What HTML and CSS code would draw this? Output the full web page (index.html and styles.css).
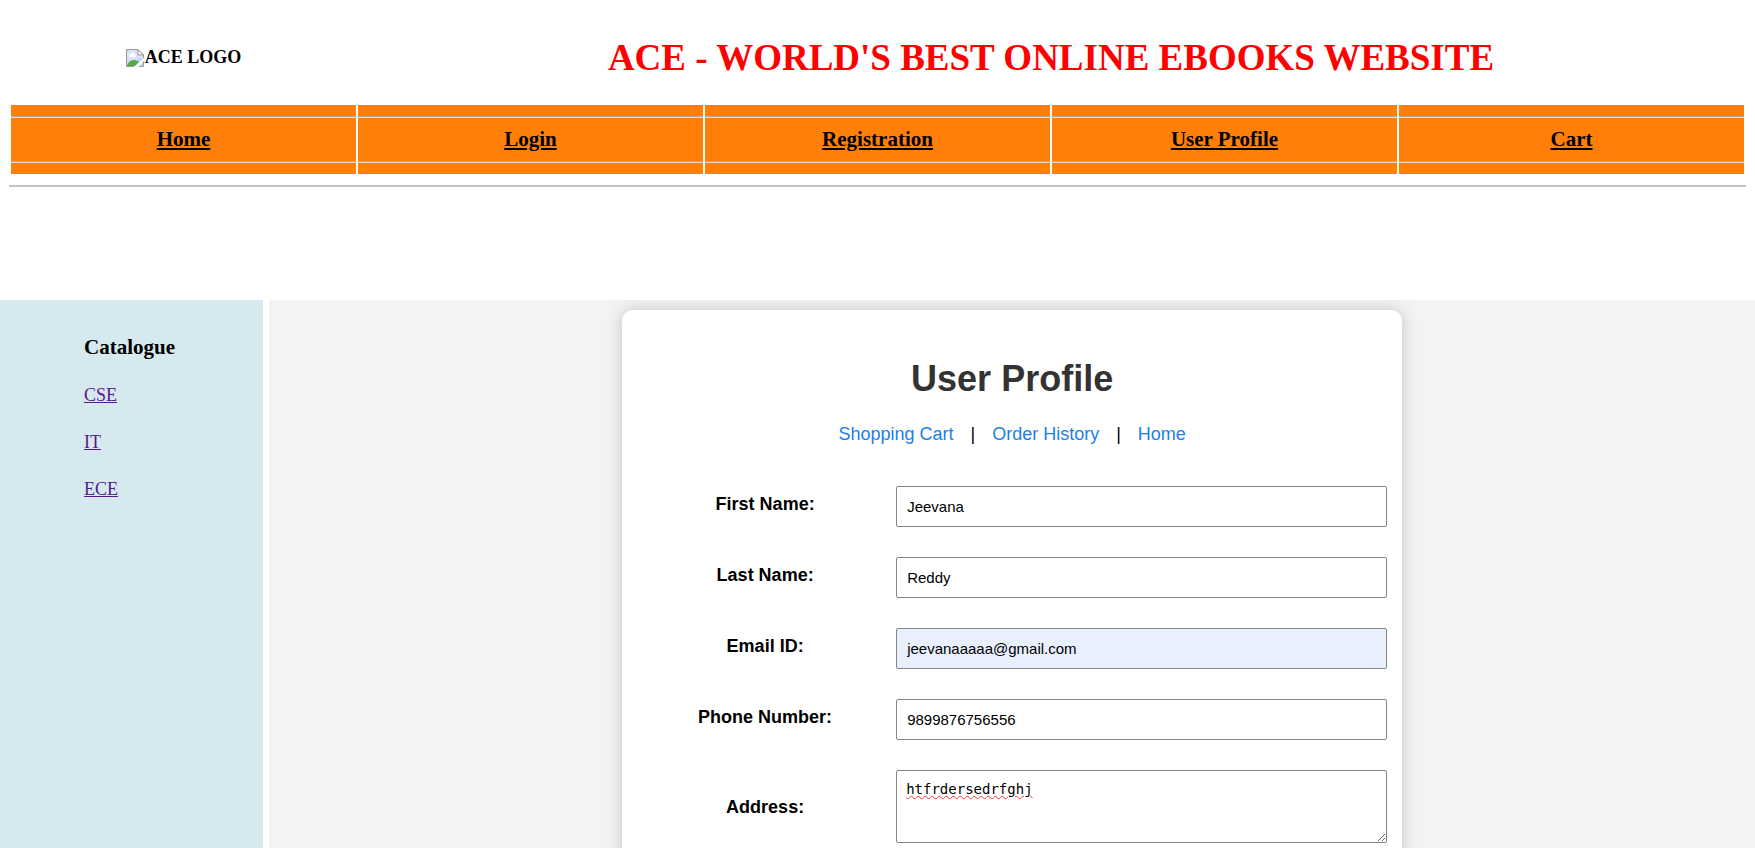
FILE: index.html
```html
<!DOCTYPE html>
<html lang="en">
<head>
<meta charset="utf-8">
<title>ACE - User Profile</title>
<link rel="stylesheet" href="styles.css">
</head>
<body>
<header class="banner">
  <div class="brand">
    <div class="logo">
      <svg class="logo-icon" viewBox="0 0 18 18" aria-hidden="true">
        <path d="M1 1h11.500l4.500 4.500V17H1z" fill="#c3d6f6"/>
        <path d="M1 1h11v5h5v3L1 13z" fill="#d5e2fa"/>
        <path d="M3 7a2 2 0 0 1 2-2 2 2 0 0 1 4 1 1 1 0 0 1 0 2H3z" fill="#fff"/>
        <path d="M1 17c1-4 4-6 7-6 2 0 4 1 5 2l-4 4z" fill="#57a846"/>
        <path d="M8 18L18 9v3l-6 6z" fill="#fff"/>
        <path d="M8 17.500H.500V.500H12l5.500 5.500v3M17.500 12.500v5H13" fill="none" stroke="#999"/>
        <path d="M12 .500V6h5.500z" fill="#fff" stroke="#999"/>
      </svg><span>ACE LOGO</span>
    </div>
    <h1 class="site-title">ACE - WORLD'S BEST ONLINE EBOOKS WEBSITE</h1>
  </div>
  <nav class="menu">
    <div class="menu-cell"><hr><a href="#">Home</a><hr></div>
    <div class="menu-cell"><hr><a href="#">Login</a><hr></div>
    <div class="menu-cell"><hr><a href="#">Registration</a><hr></div>
    <div class="menu-cell"><hr><a href="#">User Profile</a><hr></div>
    <div class="menu-cell"><hr><a href="#">Cart</a><hr></div>
  </nav>
  <hr class="rule">
</header>
<div class="frames">
  <aside class="catalogue">
    <h2>Catalogue</h2>
    <a href="#">CSE</a>
    <a href="#">IT</a>
    <a href="#">ECE</a>
  </aside>
  <main class="content">
    <section class="card">
      <h2 class="card-title">User Profile</h2>
      <div class="links">
        <a href="#">Shopping Cart</a><span>|</span><a href="#">Order History</a><span>|</span><a href="#">Home</a>
      </div>
      <form class="form">
        <div class="row"><label for="first">First Name:</label><input id="first" type="text" value="Jeevana"></div>
        <div class="row"><label for="last">Last Name:</label><input id="last" type="text" value="Reddy"></div>
        <div class="row"><label for="email">Email ID:</label><input id="email" class="autofilled" type="email" value="jeevanaaaaa@gmail.com"></div>
        <div class="row"><label for="phone">Phone Number:</label><input id="phone" type="tel" value="9899876756556"></div>
        <div class="row row-area"><label for="address">Address:</label><textarea id="address" spellcheck="false">htfrdersedrfghj</textarea></div>
      </form>
    </section>
  </main>
</div>
</body>
</html>
```
FILE: styles.css
```css
* {
  box-sizing: border-box;
}

body {
  margin: 0;
  height: 100vh;
  display: flex;
  flex-direction: column;
  background: #fff;
  color: #000;
  font-family: "Liberation Serif", "Times New Roman", serif;
  font-size: 18px;
}

.banner {
  height: 300px;
  flex: none;
  padding: 10px 9px 0;
}

.brand,
.menu {
  display: grid;
  grid-template-columns: repeat(5, 1fr);
  gap: 2px;
  padding: 0 2px;
}

.brand {
  align-items: center;
}

.logo {
  display: flex;
  justify-content: center;
  align-items: center;
  gap: 1px;
  font-weight: bold;
}

.logo-icon {
  width: 18px;
  height: 18px;
}

.site-title {
  grid-column: 2 / -1;
  margin: 26px 0;
  font-size: 37px;
  line-height: 43px;
  text-align: center;
  color: #f00;
}

.menu-cell {
  padding: 11px 0;
  background: #ff7f08;
  text-align: center;
  font-size: 21px;
  line-height: 23px;
  font-weight: bold;
}

.menu-cell a {
  display: inline-block;
  margin: 10px 0;
  color: #000;
}

.menu-cell hr {
  margin: 0;
  border: 0;
  border-top: 1px solid #aaa;
  border-bottom: 1px solid #e6d8c8;
}

.rule {
  margin: 11px 0 0;
  border: 0;
  border-top: 2px solid #c4c4c4;
}

.frames {
  flex: 1;
  min-height: 0;
  display: grid;
  grid-template-columns: 15% 1fr;
  grid-template-rows: 100%;
  gap: 6px;
}

.catalogue {
  display: flex;
  flex-direction: column;
  align-items: flex-start;
  gap: 26px;
  padding: 36px 0 0 84px;
  background: #d6e9ee;
}

.catalogue h2 {
  margin: 0;
  font-size: 21px;
  line-height: 23px;
}

.catalogue a {
  line-height: 21px;
  color: #551a8b;
}

.content {
  overflow: auto;
  scrollbar-width: none;
  padding: 10px 20px 0;
  background: #f3f3f3;
  font-family: "Liberation Sans", Arial, sans-serif;
}

.card {
  max-width: 780px;
  margin: 0 auto;
  padding: 48px 15px 40px;
  border-radius: 11px;
  background: #fff;
  box-shadow: 0 0 16px rgba(0, 0, 0, 0.2);
}

.card-title {
  margin: 0;
  font-size: 36px;
  line-height: 42px;
  text-align: center;
  color: #333;
}

.links {
  display: flex;
  justify-content: center;
  gap: 17px;
  margin: 24px 0 42px;
  line-height: 20px;
}

.links a {
  color: #1a7fe8;
  text-decoration: none;
}

.form {
  display: grid;
  gap: 30px;
}

.row {
  display: grid;
  grid-template-columns: 256px 1fr;
  gap: 3px;
  align-items: start;
}

.row label {
  padding-top: 8px;
  line-height: 20px;
  font-weight: bold;
  text-align: center;
}

.row-area {
  align-items: center;
}

.row-area label {
  padding-top: 0;
}

.row input,
.row textarea {
  width: 100%;
  border: 1px solid #858585;
  border-radius: 2px;
  background: #fff;
  color: #000;
}

.row input {
  height: 41px;
  padding: 0 10px;
  font: 15px "Liberation Sans", Arial, sans-serif;
}

.row .autofilled {
  background: #e8f0fe;
}

.row textarea {
  display: block;
  height: 73px;
  padding: 10px 9px;
  font: 14px "DejaVu Sans Mono", monospace;
  text-decoration: underline wavy #f33 1px;
}
```
